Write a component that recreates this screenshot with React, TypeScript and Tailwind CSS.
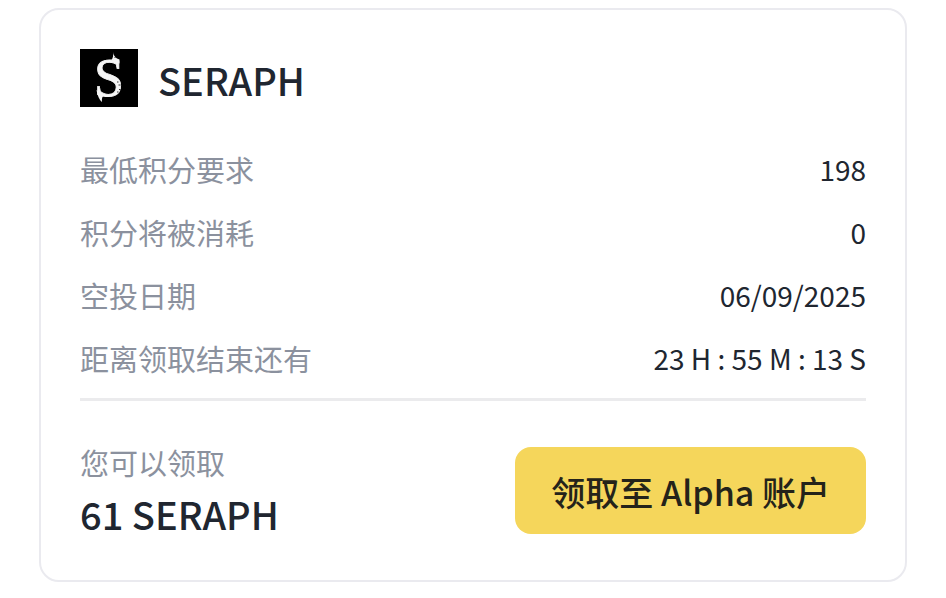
interface DetailRowProps {
  label: string
  value: string
}

const details: DetailRowProps[] = [
  { label: '最低积分要求', value: '198' },
  { label: '积分将被消耗', value: '0' },
  { label: '空投日期', value: '06/09/2025' },
  { label: '距离领取结束还有', value: '23 H : 55 M : 13 S' }
]

function SeraphLogo() {
  return (
    <svg viewBox="0 0 58 58" className="size-[58px] shrink-0 bg-black" aria-hidden="true">
      <text
        x="29"
        y="47"
        textAnchor="middle"
        fill="#f5f5f5"
        stroke="#f5f5f5"
        strokeWidth="0.8"
        fontSize="54"
        className="font-['Liberation_Serif',serif]"
      >
        S
      </text>
      {/* Horn and tail */}
      <path d="M33 3c.3 3 1.8 5 4 6.500l2.500 1v4l-8-3.500c1.600-2 2-5 1.500-8Z" fill="#f5f5f5" />
      <path d="M16.500 41c2.500 2 5.500 3.500 8 5-2.500 1.500-2.800 3.500-2.500 7-2.500-2-4.500-6-5.500-12Z" fill="#f5f5f5" />
      {/* Worn edge */}
      <path d="M37 33h1.500M38.500 36h2M39 40.500h1.500M37 43h1.500" stroke="#000" strokeWidth="0.8" />
      <path d="M34.500 8.500h1" stroke="#000" strokeWidth="0.8" />
    </svg>
  )
}

function DetailRow({ label, value }: DetailRowProps) {
  return (
    <div className="flex items-center justify-between">
      <dt className="text-[29px] text-[#8b919e]">{label}</dt>
      <dd className="text-[28px]">{value}</dd>
    </div>
  )
}

export default function App() {
  return (
    <main className="bg-white px-[39px] py-2 font-['Noto_Sans_CJK_SC',sans-serif] text-[#202630]">
      <section className="rounded-[20px] border-2 border-[#eaeaef] px-[39px] pt-[39px] pb-[42px]">
        {/* Token */}
        <header className="flex items-center gap-5">
          <SeraphLogo />
          <h1 className="pt-1 text-[38px] leading-[54px] font-medium">SERAPH</h1>
        </header>

        {/* Requirements */}
        <dl className="mt-[42px] flex flex-col gap-[23px] border-b-3 border-[#ebebed] pb-5 leading-10">
          {details.map((item) => (
            <DetailRow key={item.label} label={item.label} value={item.value} />
          ))}
        </dl>

        {/* Claim */}
        <div className="mt-[41px] flex items-center justify-between">
          <div>
            <p className="text-[29px] leading-10 text-[#8b919e]">您可以领取</p>
            <p className="mt-2 text-[38px] leading-[48px] font-medium">61 SERAPH</p>
          </div>
          <button
            type="button"
            className="rounded-2xl bg-[#f5d65b] px-9 pt-[21px] pb-[19px] text-[34px] leading-[47px] font-medium text-[#24231a]"
          >
            领取至 Alpha 账户
          </button>
        </div>
      </section>
    </main>
  )
}
